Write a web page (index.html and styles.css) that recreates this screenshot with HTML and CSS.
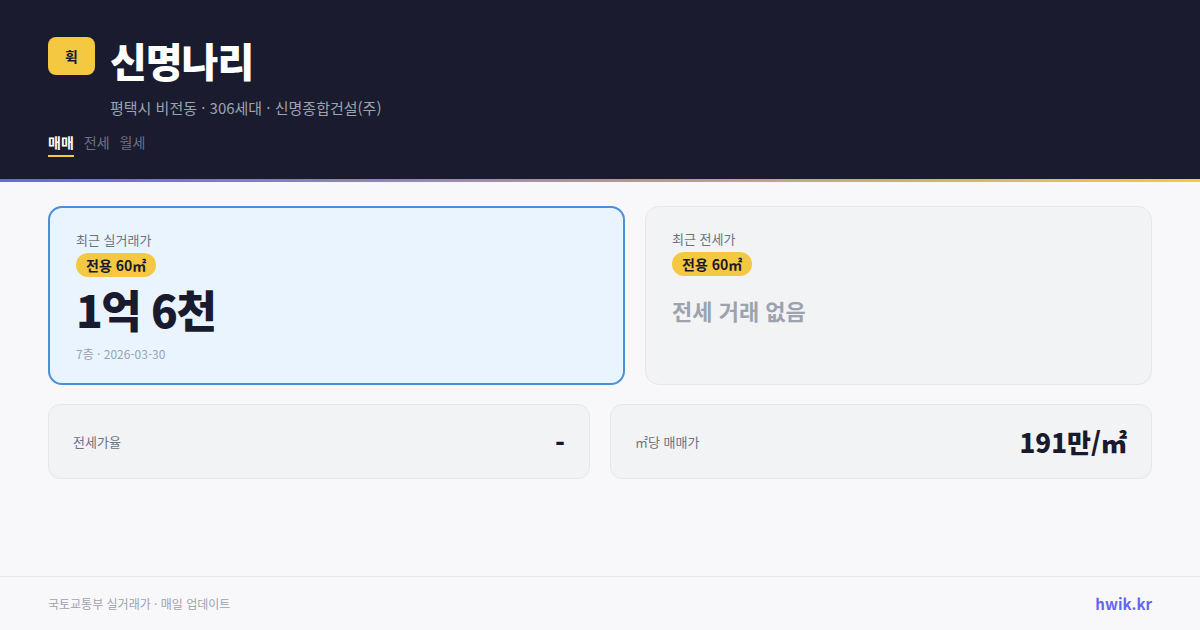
FILE: index.html
```html
<!DOCTYPE html>
<html lang="ko">
<head>
<meta charset="utf-8">
<link rel="stylesheet" href="styles.css">
</head>
<body>
<div class="page">
  <header class="header">
    <div class="head-row">
      <div class="logo">휙</div>
      <div class="title-block">
        <h1 class="title">신명나리</h1>
        <p class="subtitle">평택시 비전동 · 306세대 · 신명종합건설(주)</p>
      </div>
    </div>
    <nav class="tabs">
      <span class="tab active">매매</span>
      <span class="tab">전세</span>
      <span class="tab">월세</span>
    </nav>
  </header>
  <div class="accent"></div>
  <main class="main">
    <div class="top-grid">
      <section class="card card-primary">
        <div class="card-label">최근 실거래가</div>
        <span class="badge">전용 60㎡</span>
        <div class="price">1억 6천</div>
        <div class="meta">7층 · 2026-03-30</div>
      </section>
      <section class="card card-muted">
        <div class="card-label">최근 전세가</div>
        <span class="badge">전용 60㎡</span>
        <div class="empty">전세 거래 없음</div>
      </section>
    </div>
    <div class="bottom-grid">
      <div class="stat">
        <span class="stat-label">전세가율</span>
        <span class="stat-value dash">-</span>
      </div>
      <div class="stat">
        <span class="stat-label">㎡당 매매가</span>
        <span class="stat-value">191만/㎡</span>
      </div>
    </div>
  </main>
  <footer class="footer">
    <span class="source">국토교통부 실거래가 · 매일 업데이트</span>
    <span class="brand">hwik.kr</span>
  </footer>
</div>
</body>
</html>
```

FILE: styles.css
```css
* { box-sizing: border-box; margin: 0; padding: 0; }
html, body { width: 1200px; height: 630px; overflow: hidden; }
body {
  background: #f8f8fa;
  font-family: "Noto Sans CJK KR", "Noto Sans", sans-serif;
  color: #1a1a2e;
}
.page { display: flex; flex-direction: column; height: 630px; }
.header {
  background: #1a1b2e;
  height: 179px;
  padding: 36px 48px 0;
}
.head-row { display: flex; align-items: flex-start; gap: 15px; }
.logo {
  width: 47px; height: 38px;
  margin-top: 1px;
  background: #f5c842;
  border-radius: 8px;
  display: flex; align-items: center; justify-content: center;
  font-size: 14px; font-weight: 700; color: #1a1a2e;
}
.title {
  font-size: 40px; font-weight: 800; color: #ffffff;
  line-height: 48px; letter-spacing: -1px;
}
.subtitle {
  margin-top: 13px;
  font-size: 15px; color: #9ca3af; line-height: 22px;
}
.tabs { display: flex; gap: 10px; margin-top: 12px; }
.tab { font-size: 14px; color: #6b7280; line-height: 22px; padding-bottom: 2px; }
.tab.active { color: #ffffff; font-weight: 700; border-bottom: 2px solid #f5c842; }
.accent { height: 3px; background: linear-gradient(90deg, #6366f1, #f5c842); }
.main { flex: 1; padding: 24px 48px 0; display: flex; flex-direction: column; gap: 19px; }
.top-grid { display: grid; grid-template-columns: 577px 1fr; gap: 20px; }
.card {
  height: 179px;
  border-radius: 14px;
  padding: 22px 26px;
}
.card-primary { background: #eaf4ff; border: 2px solid #4a90d9; }
.card-muted { background: #f2f3f5; border: 1px solid #e5e7eb; padding: 22px 26px; }
.card-label { font-size: 13px; color: #6b7280; line-height: 20px; }
.badge {
  display: inline-block;
  margin-top: 3px;
  background: #f5c842;
  color: #1a1a2e;
  font-size: 14px; font-weight: 700;
  line-height: 24px;
  padding: 0 10px;
  border-radius: 12px;
}
.price {
  font-size: 44px; font-weight: 900; line-height: 52px;
  letter-spacing: -1.5px; color: #1a1a2e;
  margin-top: 6px;
}
.meta { font-size: 12px; color: #9ca3af; line-height: 18px; margin-top: 10px; }
.empty {
  font-size: 22px; font-weight: 700; color: #9ca3af;
  line-height: 32px; margin-top: 18px;
}
.bottom-grid { display: grid; grid-template-columns: 1fr 1fr; gap: 20px; }
.stat {
  height: 75px;
  background: #f2f3f5;
  border: 1px solid #e5e7eb;
  border-radius: 12px;
  padding: 0 24px;
  display: flex; align-items: center; justify-content: space-between;
}
.stat-label { font-size: 13px; color: #6b7280; }
.stat-value { font-size: 26px; font-weight: 800; color: #1a1a2e; }
.footer {
  height: 54px;
  border-top: 1px solid #e5e7eb;
  padding: 0 48px;
  display: flex; align-items: center; justify-content: space-between;
}
.source { font-size: 12px; color: #9ca3af; }
.brand { font-size: 15px; font-weight: 700; color: #6366f1; }
```
